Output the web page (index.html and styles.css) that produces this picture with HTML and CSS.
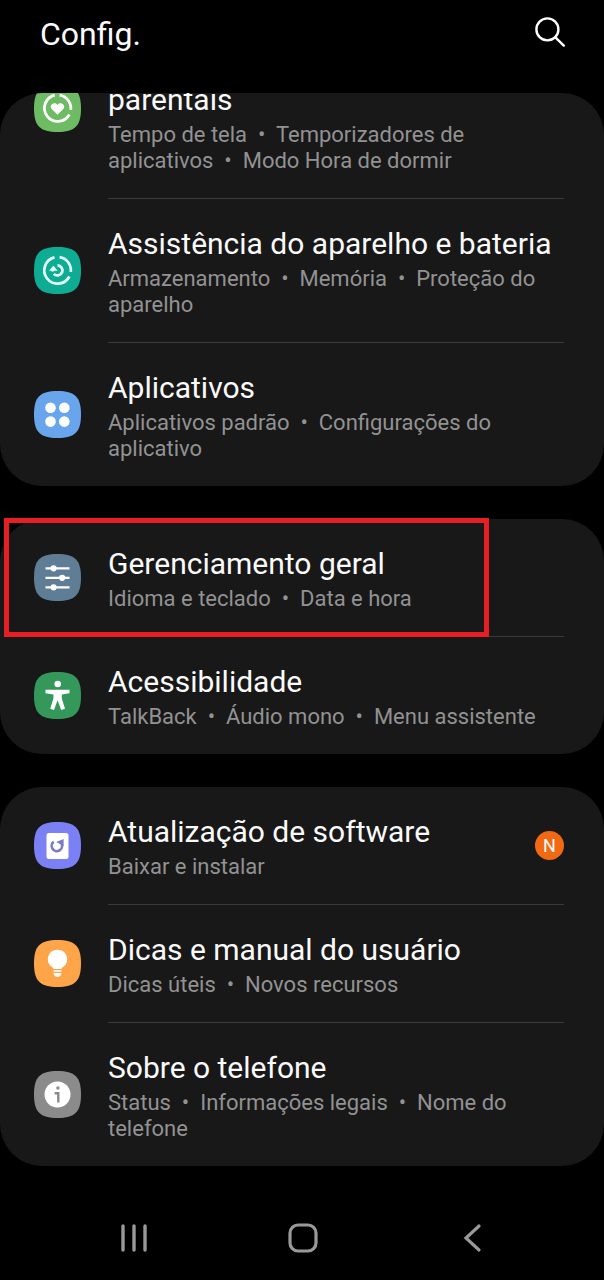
FILE: index.html
```html
<!DOCTYPE html>
<html lang="pt-BR">
<head>
  <meta charset="UTF-8" />
  <meta name="viewport" content="width=device-width, initial-scale=1.0">
  <title>Config.</title>
  <link rel="stylesheet" href="styles.css">
</head>
<body>
  <header>
    <h1>Config.</h1>
    <button class="search-button" type="button" aria-label="Pesquisar">
      <svg viewBox="0 0 32 32" fill="none" stroke="#fff" stroke-width="2.4" stroke-linecap="round">
        <circle cx="13.4" cy="13.4" r="11"/>
        <path d="M21.4 21.4l8.4 8.2"/>
      </svg>
    </button>
  </header>

  <main>
    <div class="groups">
      <ul class="card">
        <li>
          <a class="row" href="#bem-estar">
            <svg class="icon green" viewBox="0 0 47 47">
              <path class="tile" d="M23.5 0C41 0 47 6 47 23.5S41 47 23.5 47 0 41 0 23.5 6 0 23.5 0z"/>
              <g fill="none" stroke="#fff" stroke-width="2.8">
                <path d="M20.7 10.1A13.3 13.3 0 1 0 35.4 29.5"/>
                <path d="M25.6 10.2A13.3 13.3 0 0 1 36.8 24.8"/>
              </g>
              <path fill="#fff" d="M23.5 29.8l-5.8-5.7c-3.2-3.5 2.4-8.2 5.8-4.2 3.4-4 9 .7 5.8 4.2z"/>
            </svg>
            <div class="text">
              <h2>Bem-estar digital e controles parentais</h2>
              <p>Tempo de tela &nbsp;•&nbsp; Temporizadores de aplicativos &nbsp;•&nbsp; Modo Hora de dormir</p>
            </div>
          </a>
        </li>
        <li>
          <a class="row" href="#bateria">
            <svg class="icon teal" viewBox="0 0 47 47">
              <path class="tile" d="M23.5 0C41 0 47 6 47 23.5S41 47 23.5 47 0 41 0 23.5 6 0 23.5 0z"/>
              <g fill="none" stroke="#e6fffa" stroke-width="2.7">
                <path d="M20.5 10.4A13.3 13.3 0 1 0 35.4 29.5"/>
                <path d="M25.6 10.2A13.3 13.3 0 0 1 36.8 24.8"/>
                <path d="M23.5 18.4A5 5 0 1 1 19.8 26.8"/>
                <path d="M18.9 24.5A5 5 0 0 1 20 20.2"/>
              </g>
              <path fill="#e6fffa" d="M19.4 18.8l4.2 5h-8.6z"/>
            </svg>
            <div class="text">
              <h2>Assistência do aparelho e bateria</h2>
              <p>Armazenamento &nbsp;•&nbsp; Memória &nbsp;•&nbsp; Proteção do aparelho</p>
            </div>
          </a>
        </li>
        <li>
          <a class="row" href="#aplicativos">
            <svg class="icon blue" viewBox="0 0 47 47">
              <path class="tile" d="M23.5 0C41 0 47 6 47 23.5S41 47 23.5 47 0 41 0 23.5 6 0 23.5 0z"/>
              <g fill="#fff">
                <circle cx="16.5" cy="16.8" r="5.3"/>
                <circle cx="30.3" cy="16.8" r="5.3"/>
                <circle cx="16.5" cy="30.6" r="5.3"/>
                <circle cx="30.3" cy="30.6" r="5.3"/>
              </g>
            </svg>
            <div class="text">
              <h2>Aplicativos</h2>
              <p>Aplicativos padrão &nbsp;•&nbsp; Configurações do aplicativo</p>
            </div>
          </a>
        </li>
      </ul>

      <ul class="card">
        <li class="highlight">
          <a class="row" href="#gerenciamento">
            <svg class="icon slate" viewBox="0 0 47 47">
              <path class="tile" d="M23.5 0C41 0 47 6 47 23.5S41 47 23.5 47 0 41 0 23.5 6 0 23.5 0z"/>
              <path d="M11.5 14.3h24M11.5 23.8h24M11.5 33.3h24" stroke="#fff" stroke-width="2.3"/>
              <g fill="#fff">
                <circle cx="19.6" cy="14.3" r="3.1"/>
                <circle cx="28.2" cy="23.8" r="3.1"/>
                <circle cx="19.6" cy="33.3" r="3.1"/>
              </g>
            </svg>
            <div class="text">
              <h2>Gerenciamento geral</h2>
              <p>Idioma e teclado &nbsp;•&nbsp; Data e hora</p>
            </div>
          </a>
        </li>
        <li>
          <a class="row" href="#acessibilidade">
            <svg class="icon dark-green" viewBox="0 0 47 47">
              <path class="tile" d="M23.5 0C41 0 47 6 47 23.5S41 47 23.5 47 0 41 0 23.5 6 0 23.5 0z"/>
              <circle cx="23.7" cy="12" r="3.3" fill="#fff"/>
              <path fill="#fff" d="M11.5 17.8h24v3.4l-7.7 1.2v4l3.2 10.4-3.8 1.2-3.6-9.8-3.6 9.8-3.8-1.2 3.2-10.4v-4l-7.9-1.2z"/>
            </svg>
            <div class="text">
              <h2>Acessibilidade</h2>
              <p>TalkBack &nbsp;•&nbsp; Áudio mono &nbsp;•&nbsp; Menu assistente</p>
            </div>
          </a>
        </li>
      </ul>

      <ul class="card">
        <li>
          <a class="row" href="#atualizacao">
            <svg class="icon purple" viewBox="0 0 47 47">
              <path class="tile" d="M23.5 0C41 0 47 6 47 23.5S41 47 23.5 47 0 41 0 23.5 6 0 23.5 0z"/>
              <rect x="12.5" y="11" width="22" height="26" rx="2.5" fill="#fff"/>
              <path d="M19.7 19.8A5.2 5.2 0 1 0 27.6 21.8" fill="none" stroke="#7b7cc4" stroke-width="2.6"/>
              <path fill="#7b7cc4" d="M29.6 17v7l-7.4-4z"/>
            </svg>
            <div class="text">
              <h2>Atualização de software</h2>
              <p>Baixar e instalar</p>
            </div>
            <span class="badge">N</span>
          </a>
        </li>
        <li>
          <a class="row" href="#dicas">
            <svg class="icon orange" viewBox="0 0 47 47">
              <path class="tile" d="M23.5 0C41 0 47 6 47 23.5S41 47 23.5 47 0 41 0 23.5 6 0 23.5 0z"/>
              <path fill="#fff" d="M23.5 9.7a9.4 9.4 0 0 1 5.5 17.2c-1 .8-1.5 1.2-1.5 2.1h-8c0-.9-.5-1.3-1.5-2.1a9.4 9.4 0 0 1 5.5-17.2zM19.5 30.3h8v1.4h-8zM19.5 33h8c-.3 5.4-7.7 5.4-8 0z"/>
            </svg>
            <div class="text">
              <h2>Dicas e manual do usuário</h2>
              <p>Dicas úteis &nbsp;•&nbsp; Novos recursos</p>
            </div>
          </a>
        </li>
        <li>
          <a class="row" href="#sobre">
            <svg class="icon gray" viewBox="0 0 47 47">
              <path class="tile" d="M23.5 0C41 0 47 6 47 23.5S41 47 23.5 47 0 41 0 23.5 6 0 23.5 0z"/>
              <circle cx="23.5" cy="23.5" r="13" fill="#fff"/>
              <circle cx="23.9" cy="17" r="1.7" fill="#8b8b8b"/>
              <path d="M20.6 22.3h3.7v9.2" fill="none" stroke="#8b8b8b" stroke-width="2.4"/>
            </svg>
            <div class="text">
              <h2>Sobre o telefone</h2>
              <p>Status &nbsp;•&nbsp; Informações legais &nbsp;•&nbsp; Nome do telefone</p>
            </div>
          </a>
        </li>
      </ul>
    </div>
  </main>

  <nav>
    <button type="button" aria-label="Recentes">
      <svg viewBox="0 0 32 32" stroke="#999" stroke-width="3.4" stroke-linecap="round">
        <path d="M5 4v24M16 4v24M27 4v24"/>
      </svg>
    </button>
    <button type="button" aria-label="Início">
      <svg viewBox="0 0 32 32" fill="none" stroke="#999" stroke-width="3.2">
        <rect x="3" y="3" width="26" height="26" rx="8"/>
      </svg>
    </button>
    <button type="button" aria-label="Voltar">
      <svg viewBox="0 0 32 32" fill="none" stroke="#999" stroke-width="3.2" stroke-linecap="round">
        <path d="M23 4L10 16l13 12"/>
      </svg>
    </button>
  </nav>
</body>
</html>
```
FILE: styles.css
```css
* {
  box-sizing: border-box;
}
html, body {
  height: 100%;
  margin: 0;
  padding: 0;
}
body {
  display: flex;
  flex-direction: column;
  font-family: Roboto, Arial, sans-serif;
  background: #000;
  color: #fafafa;
}
h1, h2, p, ul {
  margin: 0;
  padding: 0;
  font-weight: 400;
}
button {
  padding: 0;
  border: none;
  background: none;
  cursor: pointer;
}
header {
  flex: none;
  display: flex;
  justify-content: space-between;
  align-items: flex-start;
  height: 93px;
  padding: 16px 38px 0 40px;
}
header h1 {
  font-size: 32px;
  line-height: 36px;
}
.search-button svg {
  display: block;
  width: 32px;
  height: 32px;
}
/* column-reverse keeps the list scrolled to its end */
main {
  flex: 1;
  min-height: 0;
  display: flex;
  flex-direction: column-reverse;
  overflow-y: auto;
  scrollbar-width: none;
  border-radius: 42px 42px 0 0;
}
.groups {
  flex: none;
  display: flex;
  flex-direction: column;
  gap: 33px;
  padding-bottom: 30px;
}
.card {
  list-style: none;
  background: #181818;
  border-radius: 42px;
}
.card li {
  position: relative;
}
.row {
  display: flex;
  align-items: center;
  gap: 27px;
  padding: 24px 40px 24px 34px;
  color: inherit;
  text-decoration: none;
}
.card li + li::before {
  content: "";
  display: block;
  height: 1px;
  margin: 0 40px 0 108px;
  background: #3a3a3a;
}
.icon {
  flex: none;
  width: 47px;
  height: 47px;
}
.text {
  flex: 1;
  min-width: 0;
  padding-top: 3px;
}
.text h2 {
  font-size: 30px;
  line-height: 36px;
}
.text p {
  margin-top: 4px;
  font-size: 22px;
  line-height: 26px;
  color: #929292;
}
.green .tile { fill: #6dbb63; }
.teal .tile { fill: #0fac94; }
.blue .tile { fill: #69a5ec; }
.slate .tile { fill: #5f7d95; }
.dark-green .tile { fill: #339859; }
.purple .tile { fill: #7c80f5; }
.orange .tile { fill: #fea449; }
.gray .tile { fill: #8b8b8b; }
.badge {
  flex: none;
  width: 29px;
  height: 29px;
  border-radius: 50%;
  background: #f16a13;
  font-size: 18px;
  line-height: 29px;
  text-align: center;
}
.highlight::after {
  content: "";
  position: absolute;
  top: -1px;
  right: 115px;
  bottom: -1px;
  left: 4px;
  border: 5px solid #e81e25;
  pointer-events: none;
  z-index: 1;
}
nav {
  flex: none;
  display: flex;
  justify-content: space-between;
  align-items: center;
  height: 84px;
  padding: 0 116px 0 118px;
}
nav svg {
  display: block;
  width: 32px;
  height: 32px;
}
```
